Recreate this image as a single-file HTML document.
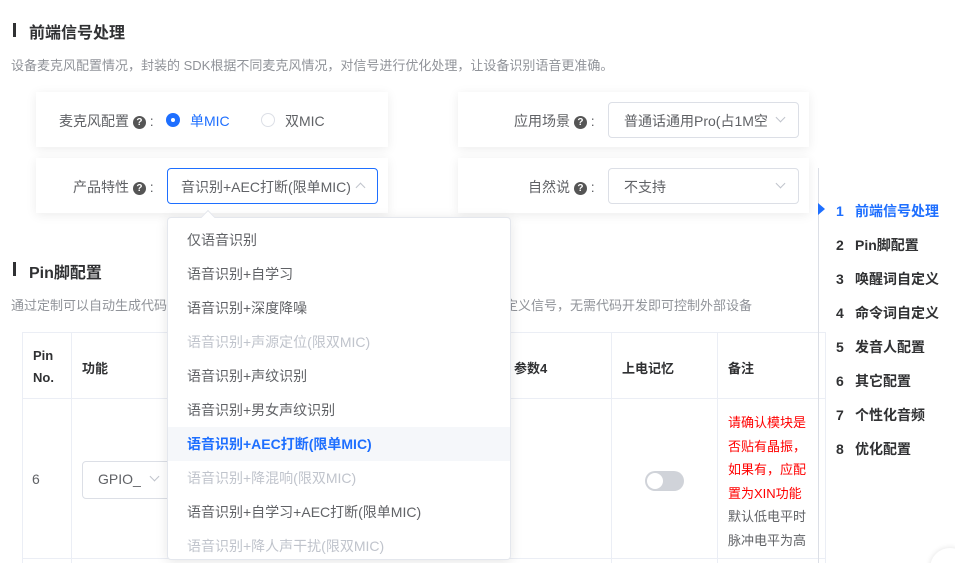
<!DOCTYPE html>
<html><head><meta charset="utf-8"><style>
*{margin:0;padding:0;box-sizing:border-box}
html,body{width:955px;height:563px;overflow:hidden}
body{background:#fff;font-family:"Liberation Sans","Noto Sans CJK SC",sans-serif;color:#606266;position:relative;font-size:14px}
.a{position:absolute;white-space:nowrap}
.h{font-size:16px;font-weight:bold;color:#303133}
.bar{position:absolute;width:3px;height:14px;background:#303133}
.desc{font-size:13px;color:#909399}
.card{position:absolute;background:#fff;box-shadow:0 2px 10px rgba(0,0,0,.08)}
.q{display:inline-block;width:13px;height:13px;border-radius:50%;background:#555;color:#fff;font-size:10px;line-height:13px;text-align:center;font-weight:bold;vertical-align:1px}
.sel{position:absolute;border:1px solid #dcdfe6;border-radius:4px;background:#fff}
.chev{position:absolute;width:7px;height:7px;border-right:1px solid #c0c4cc;border-bottom:1px solid #c0c4cc;transform:rotate(45deg)}
.dd{position:absolute;left:167px;top:217px;width:344px;height:343px;background:#fff;border:1px solid #e4e7ed;border-radius:4px;box-shadow:0 2px 12px rgba(0,0,0,.1)}
.it{position:absolute;left:0;width:342px;height:34px;line-height:34px;padding-left:19px;font-size:14px;color:#606266}
.dis{color:#c0c4cc}
.nav{position:absolute;left:836px;font-size:14px;font-weight:bold;color:#303133}
.nav b{display:inline-block;width:19px}
.tl{position:absolute;background:#ebeef5}
</style></head><body>
<div class="bar" style="left:13px;top:23px"></div>
<div class="a h" style="left:29px;top:19px">前端信号处理</div>
<div class="a desc" style="left:11px;top:55px">设备麦克风配置情况，封装的 SDK根据不同麦克风情况，对信号进行优化处理，让设备识别语音更准确。</div>

<div class="card" style="left:36px;top:92px;width:352px;height:55px"></div>
<div class="card" style="left:36px;top:158px;width:352px;height:55px"></div>
<div class="card" style="left:458px;top:92px;width:351px;height:55px"></div>
<div class="card" style="left:458px;top:158px;width:351px;height:55px"></div>

<div class="a" style="left:59px;top:111px">麦克风配置 <span class="q">?</span> :</div>
<div class="a" style="left:166px;top:113px;width:14px;height:14px;border-radius:50%;background:#1e6fff"><div style="position:absolute;left:5px;top:5px;width:4px;height:4px;border-radius:50%;background:#fff"></div></div>
<div class="a" style="left:190px;top:111px;color:#1e6fff">单MIC</div>
<div class="a" style="left:261px;top:113px;width:14px;height:14px;border-radius:50%;border:1px solid #dcdfe6"></div>
<div class="a" style="left:285px;top:111px;color:#606266">双MIC</div>

<div class="a" style="left:73px;top:177px">产品特性 <span class="q">?</span> :</div>
<div class="sel" style="left:167px;top:168px;width:211px;height:36px;border-color:#1e6fff"></div>
<div class="a" style="left:181px;top:177px;color:#606266">音识别+AEC打断(限单MIC)</div>
<div class="chev" style="left:357px;top:184px;transform:rotate(225deg)"></div>
<div class="a" style="left:203px;top:212px;width:10px;height:10px;background:#fff;border-left:1px solid #e4e7ed;border-top:1px solid #e4e7ed;transform:rotate(45deg);z-index:3"></div>

<div class="a" style="left:514px;top:111px">应用场景 <span class="q">?</span> :</div>
<div class="sel" style="left:608px;top:102px;width:191px;height:36px"></div>
<div class="a" style="left:624px;top:111px">普通话通用Pro(占1M空</div>
<div class="chev" style="left:777px;top:114px"></div>
<div class="a" style="left:528px;top:177px">自然说 <span class="q">?</span> :</div>
<div class="sel" style="left:608px;top:168px;width:191px;height:36px"></div>
<div class="a" style="left:624px;top:177px">不支持</div>
<div class="chev" style="left:777px;top:180px"></div>

<div class="bar" style="left:13px;top:262px"></div>
<div class="a h" style="left:29px;top:259px">Pin脚配置</div>
<div class="a desc" style="left:11px;top:295px">通过定制可以自动生成代码，配置相关引脚功能，可设置上电状态等，支持引脚输出自定义信号，无需代码开发即可控制外部设备</div>

<div class="tl" style="left:22px;top:332px;width:804px;height:1px"></div>
<div class="tl" style="left:22px;top:398px;width:804px;height:1px"></div>
<div class="tl" style="left:22px;top:558px;width:804px;height:1px"></div>
<div class="tl" style="left:22px;top:332px;width:1px;height:231px"></div>
<div class="tl" style="left:71px;top:332px;width:1px;height:231px"></div>
<div class="tl" style="left:611px;top:332px;width:1px;height:231px"></div>
<div class="tl" style="left:717px;top:332px;width:1px;height:231px"></div>
<div class="tl" style="left:825px;top:332px;width:1px;height:231px"></div>
<div class="a" style="left:33px;top:345px;font-weight:bold;color:#303133;font-size:13px;line-height:22px">Pin<br>No.</div>
<div class="a" style="left:82px;top:358px;font-weight:bold;color:#303133;font-size:13px">功能</div>
<div class="a" style="left:514px;top:358px;font-weight:bold;color:#303133;font-size:13px">参数4</div>
<div class="a" style="left:622px;top:358px;font-weight:bold;color:#303133;font-size:13px">上电记忆</div>
<div class="a" style="left:728px;top:358px;font-weight:bold;color:#303133;font-size:13px">备注</div>
<div class="a" style="left:32px;top:471px">6</div>
<div class="sel" style="left:82px;top:461px;width:90px;height:38px"></div>
<div class="a" style="left:98px;top:471px">GPIO_</div>
<div class="chev" style="left:151px;top:473px"></div>
<div class="a" style="left:645px;top:471px;width:39px;height:20px;border-radius:10px;background:#d0d3d9"><div style="position:absolute;left:2px;top:2px;width:16px;height:16px;border-radius:50%;background:#fff"></div></div>
<div class="a" style="left:728px;top:411px;font-size:13px;line-height:23.5px;color:#f00">请确认模块是<br>否贴有晶振，<br>如果有，应配<br>置为XIN功能<br><span style="color:#606266">默认低电平时<br>脉冲电平为高</span></div>

<div class="a" style="left:818px;top:168px;width:1px;height:395px;background:#dcdfe6"></div>
<div class="a" style="left:818px;top:203px;width:0;height:0;border-top:6px solid transparent;border-bottom:6px solid transparent;border-left:7px solid #1e6fff"></div>
<div class="nav" style="top:201px;color:#1e6fff"><b>1</b>前端信号处理</div>
<div class="nav" style="top:235px"><b>2</b>Pin脚配置</div>
<div class="nav" style="top:269px"><b>3</b>唤醒词自定义</div>
<div class="nav" style="top:303px"><b>4</b>命令词自定义</div>
<div class="nav" style="top:337px"><b>5</b>发音人配置</div>
<div class="nav" style="top:371px"><b>6</b>其它配置</div>
<div class="nav" style="top:405px"><b>7</b>个性化音频</div>
<div class="nav" style="top:439px"><b>8</b>优化配置</div>
<div class="a" style="left:930px;top:548px;width:40px;height:40px;border-radius:50%;background:#fff;box-shadow:0 0 6px rgba(0,0,0,.12)"></div>

<div class="dd">
<div class="it" style="top:5px">仅语音识别</div>
<div class="it" style="top:39px">语音识别+自学习</div>
<div class="it" style="top:73px">语音识别+深度降噪</div>
<div class="it dis" style="top:107px">语音识别+声源定位(限双MIC)</div>
<div class="it" style="top:141px">语音识别+声纹识别</div>
<div class="it" style="top:175px">语音识别+男女声纹识别</div>
<div class="it" style="top:209px;background:#f5f7fa;color:#1e6fff;font-weight:bold">语音识别+AEC打断(限单MIC)</div>
<div class="it dis" style="top:243px">语音识别+降混响(限双MIC)</div>
<div class="it" style="top:277px">语音识别+自学习+AEC打断(限单MIC)</div>
<div class="it dis" style="top:311px">语音识别+降人声干扰(限双MIC)</div>
</div>
</body></html>
